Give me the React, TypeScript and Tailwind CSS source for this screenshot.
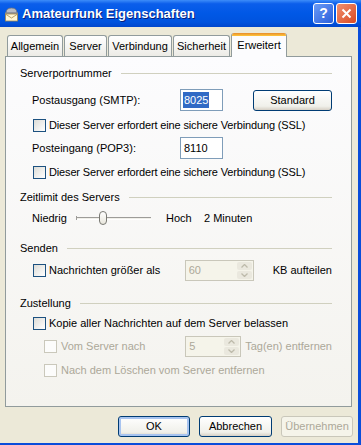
import React from "react";

const FONT = "font-['Liberation_Sans','Arial',sans-serif]";

function Check({ disabled }: { disabled?: boolean }) {
  return (
    <span
      className={`block h-[13px] w-[13px] shrink-0 border ${
        disabled
          ? "border-[#CAC8BB] bg-[#FCFCFB]"
          : "border-[#1C5180] bg-[linear-gradient(135deg,#DCDCD7,#FFFFFF)]"
      }`}
    />
  );
}

function GroupHeader({ title, mt }: { title: string; mt: string }) {
  return (
    <div className={`flex h-[16px] items-center gap-[9px] ${mt}`}>
      <span>{title}</span>
      <span className="h-px flex-1 bg-[#D0D0BF]" />
    </div>
  );
}

function Spinner({ value, w }: { value: string; w: string }) {
  return (
    <div
      className={`flex h-[21px] ${w} shrink-0 items-stretch border border-[#C9C7BA] bg-[#F5F4EA] text-[#ACA899]`}
    >
      <span className="flex flex-1 items-center pl-[3px]">{value}</span>
      <span className="m-px flex w-[15px] flex-col gap-px">
        <span className="flex flex-1 items-center justify-center rounded-[2px] bg-[#EAE8DE]">
          <svg width="7" height="4" viewBox="0 0 7 4">
            <path d="M0.5 3.5 L3.5 0.5 L6.5 3.5" fill="none" stroke="#BDBAAA" strokeWidth="1.3" />
          </svg>
        </span>
        <span className="flex flex-1 items-center justify-center rounded-[2px] bg-[#EAE8DE]">
          <svg width="7" height="4" viewBox="0 0 7 4">
            <path d="M0.5 0.5 L3.5 3.5 L6.5 0.5" fill="none" stroke="#BDBAAA" strokeWidth="1.3" />
          </svg>
        </span>
      </span>
    </div>
  );
}

function Tab({ label, w, active }: { label: string; w: string; active?: boolean }) {
  if (active) {
    return (
      <div
        className={`relative z-10 -mb-px flex h-[24px] ${w} flex-col overflow-hidden rounded-t-[3px] border-x border-[#919B9C] bg-[#FCFCFE]`}
      >
        <span className="h-[3px] shrink-0 bg-[linear-gradient(to_bottom,#E68B2C,#FFC73C)]" />
        <span className="flex flex-1 items-start justify-center pt-[1px]">{label}</span>
      </div>
    );
  }
  return (
    <div
      className={`flex h-[21px] ${w} items-center justify-center rounded-t-[3px] border-x border-t border-[#919B9C] bg-[linear-gradient(to_bottom,#FFFFFF,#ECEBE6)]`}
    >
      {label}
    </div>
  );
}

function MailIcon() {
  return (
    <svg width="17" height="16" viewBox="0 0 17 16">
      <path d="M3 7 Q3 2 8.5 2 Q14 2 14 7 Z" fill="#B9BCC4" stroke="#6B6F78" strokeWidth="0.8" />
      <rect x="2" y="6.5" width="13" height="1.6" fill="#8A8E97" />
      <rect x="2.5" y="8" width="12" height="7" fill="#FFF6D6" stroke="#A68B4A" strokeWidth="0.8" />
      <path d="M2.8 8.3 L8.5 12 L14.2 8.3" fill="none" stroke="#A68B4A" strokeWidth="0.8" />
    </svg>
  );
}

export default function App() {
  return (
    <div
      className={`flex h-[445px] w-[361px] flex-col overflow-hidden whitespace-nowrap bg-[#ECE9D8] text-[11px] text-black ${FONT}`}
    >
      {/* title bar */}
      <div className="flex h-[27px] shrink-0 items-center bg-[linear-gradient(to_bottom,#3D8DF9_0%,#0B5EEB_14%,#0058E6_50%,#0053DE_82%,#0046CC_100%)] pl-[3px] pr-[4px]">
        <MailIcon />
        <span className="ml-[2px] text-[13px] font-bold text-white [text-shadow:1px_1px_0_#0A1E7A]">
          Amateurfunk Eigenschaften
        </span>
        <div className="ml-auto flex gap-[2px]">
          <span className="flex h-[21px] w-[21px] items-center justify-center rounded-[3px] border border-white bg-[linear-gradient(135deg,#6A9BF6,#2A5FDB)] text-[14px] font-bold text-white">
            ?
          </span>
          <span className="flex h-[21px] w-[21px] items-center justify-center rounded-[3px] border border-white bg-[linear-gradient(135deg,#F09070,#DA4A22)]">
            <svg width="11" height="11" viewBox="0 0 11 11">
              <path d="M1.5 1.5 L9.5 9.5 M9.5 1.5 L1.5 9.5" stroke="white" strokeWidth="2" />
            </svg>
          </span>
        </div>
      </div>

      {/* body */}
      <div className="flex flex-1 flex-col border-r-[3px] border-b-[2px] border-[#0A4DDA]">
        <div className="ml-[7px] mt-[6px] flex h-[23px] items-end gap-[1px]">
          <Tab label="Allgemein" w="w-[56px]" />
          <Tab label="Server" w="w-[43px]" />
          <Tab label="Verbindung" w="w-[64px]" />
          <Tab label="Sicherheit" w="w-[57px]" />
          <Tab label="Erweitert" w="w-[56px]" active />
        </div>

        <div className="ml-[5px] flex h-[351px] w-[347px] flex-col border border-[#919B9C] bg-[linear-gradient(to_bottom,#FCFCFE,#F4F3EE)] pl-[14px] pr-[19px] pt-[8px]">
          <GroupHeader title="Serverportnummer" mt="mt-0" />

          <div className="mt-[8px] flex h-[22px] items-center pl-[12px]">
            <span className="w-[148px]">Postausgang (SMTP):</span>
            <span className="flex h-[22px] w-[43px] items-center border border-[#7F9DB9] bg-white pl-[2px]">
              <span className="bg-[#316AC5] px-px text-white">8025</span>
            </span>
            <span className="ml-[30px] flex h-[21px] w-[79px] items-center justify-center rounded-[3px] border border-[#003C74] bg-[linear-gradient(to_bottom,#FFFFFF,#F0F0EA_80%,#D6D0C5)]">
              Standard
            </span>
          </div>

          <div className="mt-[7px] flex h-[14px] items-center gap-[3px] pl-[13px]">
            <Check />
            <span className="tracking-[-0.15px]">Dieser Server erfordert eine sichere Verbindung (SSL)</span>
          </div>

          <div className="mt-[5px] flex h-[22px] items-center pl-[12px]">
            <span className="w-[148px]">Posteingang (POP3):</span>
            <span className="flex h-[22px] w-[43px] items-center border border-[#7F9DB9] bg-white pl-[3px]">
              8110
            </span>
          </div>

          <div className="mt-[6px] flex h-[14px] items-center gap-[3px] pl-[13px]">
            <Check />
            <span className="tracking-[-0.15px]">Dieser Server erfordert eine sichere Verbindung (SSL)</span>
          </div>

          <GroupHeader title="Zeitlimit des Servers" mt="mt-[10px]" />

          <div className="mt-[3px] flex h-[20px] items-center pl-[12px]">
            <span className="w-[44px]">Niedrig</span>
            <div className="relative flex h-[20px] w-[75px] items-center">
              <span className="h-[3px] w-full border-t border-[#9D9C99] border-b border-b-white bg-[#F0EFE9]" />
              <span className="absolute left-0 top-[8px] h-[4px] w-px bg-[#9D9C99]" />
              <span className="absolute left-[23px] top-[3px] h-[14px] w-[8px] rounded-[4px] border border-[#7A7A74] bg-[linear-gradient(to_bottom,#FFFFFF,#E8E6DC)]" />
            </div>
            <span className="ml-[15px] w-[38px]">Hoch</span>
            <span>2 Minuten</span>
          </div>

          <GroupHeader title="Senden" mt="mt-[12px]" />

          <div className="mt-[4px] flex h-[21px] items-center pl-[13px]">
            <Check />
            <span className="ml-[3px] w-[141px]">Nachrichten größer als</span>
            <Spinner value="60" w="w-[69px]" />
            <span className="ml-[19px]">KB aufteilen</span>
          </div>

          <GroupHeader title="Zustellung" mt="mt-[14px]" />

          <div className="mt-[5px] flex h-[14px] items-center gap-[3px] pl-[13px]">
            <Check />
            <span>Kopie aller Nachrichten auf dem Server belassen</span>
          </div>

          <div className="mt-[6px] flex h-[21px] items-center pl-[24px] text-[#ACA899]">
            <Check disabled />
            <span className="ml-[4px] w-[128px]">Vom Server nach</span>
            <Spinner value="5" w="w-[56px]" />
            <span className="ml-[4px]">Tag(en) entfernen</span>
          </div>

          <div className="mt-[6px] flex h-[14px] items-center gap-[4px] pl-[24px] text-[#ACA899]">
            <Check disabled />
            <span>Nach dem Löschen vom Server entfernen</span>
          </div>
        </div>

        <div className="mt-[9px] flex h-[21px] gap-[9px] pl-[118px]">
          <span className="flex w-[72px] items-center justify-center rounded-[3px] border border-[#003C74] bg-[linear-gradient(to_bottom,#FFFFFF,#F0F0EA_80%,#D6D0C5)] shadow-[inset_0_0_0_2px_#A8C4F0]">
            OK
          </span>
          <span className="flex w-[73px] items-center justify-center rounded-[3px] border border-[#003C74] bg-[linear-gradient(to_bottom,#FFFFFF,#F0F0EA_80%,#D6D0C5)]">
            Abbrechen
          </span>
          <span className="flex w-[72px] items-center justify-center rounded-[3px] border border-[#C9C7BA] bg-[#F5F4EA] text-[#ACA899]">
            Übernehmen
          </span>
        </div>
      </div>
    </div>
  );
}
